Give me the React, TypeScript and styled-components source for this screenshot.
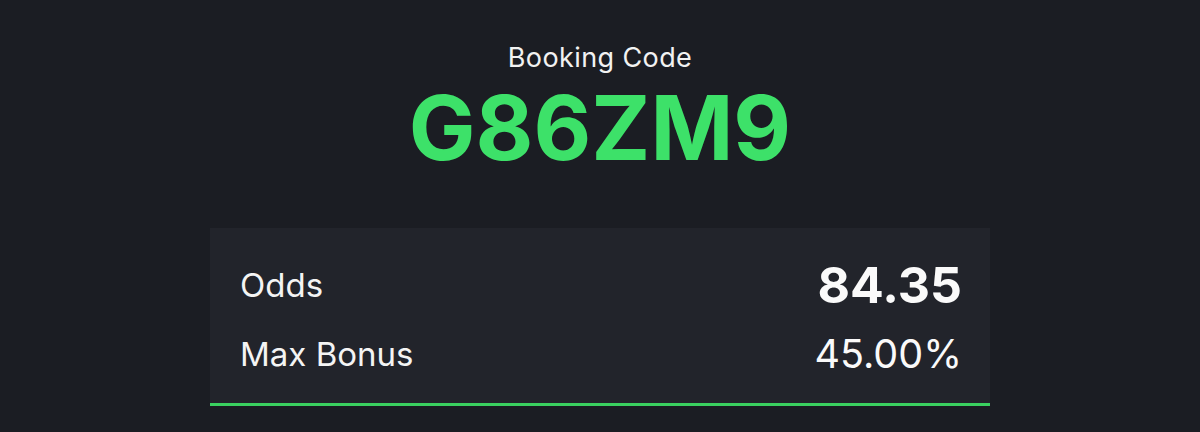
import React from "react";
import styled, { createGlobalStyle } from "styled-components";

const Global = createGlobalStyle`
  html, body { margin: 0; padding: 0; background: #1b1d23; }
  body { font-family: Inter, "Noto Sans", sans-serif; color: #fff; }
`;

const Page = styled.div`
  width: 1200px;
  height: 432px;
  background: #1b1d23;
  display: flex;
  flex-direction: column;
  align-items: center;
  padding-top: 41px;
  box-sizing: border-box;
`;

const Label = styled.div`
  font-size: 27px;
  line-height: 34px;
  font-weight: 400;
  color: #f2f2f2;
  letter-spacing: 0.4px;
`;

const Code = styled.div`
  font-size: 89px;
  line-height: 100px;
  font-weight: 700;
  color: #3de169;
  margin-top: 3px;
`;

const Panel = styled.div`
  margin-top: 50px;
  width: 780px;
  box-sizing: border-box;
  background: #22242b;
  padding: 29px 28px 21px 30px;
  display: flex;
  flex-direction: column;
  gap: 13px;
  border-bottom: 3px solid #3ad160;
`;

const Row = styled.div`
  display: flex;
  justify-content: space-between;
  align-items: center;
  height: 56px;
`;

const Key = styled.span`
  font-size: 33px;
  color: #f4f4f4;
`;

const Value = styled.span<{ $strong?: boolean }>`
  font-size: ${(p) => (p.$strong ? "50px" : "39.5px")};
  font-weight: ${(p) => (p.$strong ? 700 : 400)};
  color: #fafafa;
`;

export default function App() {
  return (
    <>
      <Global />
      <Page>
        <Label>Booking Code</Label>
        <Code>G86ZM9</Code>
        <Panel>
          <Row>
            <Key>Odds</Key>
            <Value $strong>84.35</Value>
          </Row>
          <Row>
            <Key>Max Bonus</Key>
            <Value>45.00%</Value>
          </Row>
        </Panel>
      </Page>
    </>
  );
}
